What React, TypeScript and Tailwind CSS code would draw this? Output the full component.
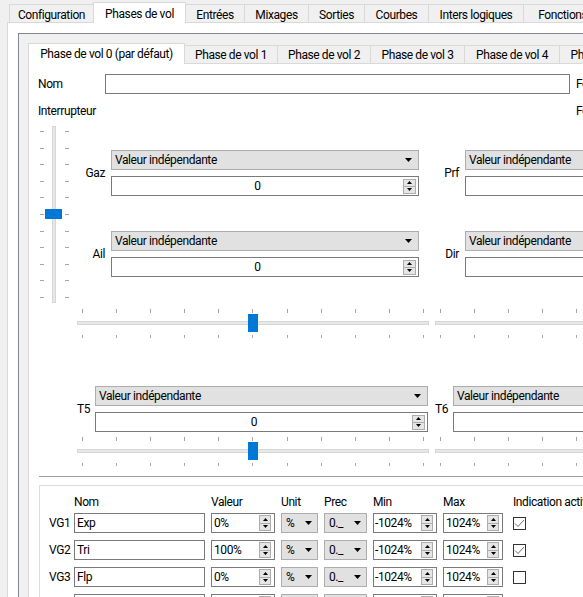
import React from 'react';

const outerTabs = [
  { name: 'Configuration', w: 'w-[85px]' },
  { name: 'Phases de vol', w: 'w-[93px]', active: true },
  { name: 'Entrées', w: 'w-[59px]' },
  { name: 'Mixages', w: 'w-[64px]' },
  { name: 'Sorties', w: 'w-[56px]' },
  { name: 'Courbes', w: 'w-[64px]' },
  { name: 'Inters logiques', w: 'w-[95px]' },
  { name: 'Fonctions spéciales', w: 'w-[128px]' },
];

const innerTabs = [
  { name: 'Phase de vol 0 (par défaut)', w: 'w-[157px]', active: true },
  { name: 'Phase de vol 1', w: 'w-[93px]' },
  { name: 'Phase de vol 2', w: 'w-[93px]' },
  { name: 'Phase de vol 3', w: 'w-[94px]' },
  { name: 'Phase de vol 4', w: 'w-[95px]' },
  { name: 'Phase de vol 5', w: 'w-[94px]' },
];

const vars = [
  { id: 'VG1', name: 'Exp', value: '0%', checked: true },
  { id: 'VG2', name: 'Tri', value: '100%', checked: true },
  { id: 'VG3', name: 'Flp', value: '0%', checked: false },
  { id: 'VG4', name: '', value: '0%', checked: false },
];

const ticks = Array.from({ length: 11 }, (_, i) => i);

function Arrow() {
  return (
    <svg width="7" height="4" viewBox="0 0 7 4" className="shrink-0">
      <path d="M0 0H7L3.5 4Z" fill="#000" />
    </svg>
  );
}

function SpinBtns({ small }: { small?: boolean }) {
  return (
    <div
      className={
        small
          ? 'mr-[3px] flex h-[16px] w-[12px] shrink-0 flex-col border border-[#adadad] bg-[#e5e5e5]'
          : 'mr-[2px] flex h-[15px] w-[13px] shrink-0 flex-col border border-[#adadad] bg-[#e5e5e5]'
      }
    >
      <div className="flex flex-1 items-center justify-center border-b border-[#adadad]">
        <svg width="5" height="3" viewBox="0 0 5 3">
          <path d="M2.5 0L5 3H0Z" fill="#000" />
        </svg>
      </div>
      <div className="flex flex-1 items-center justify-center">
        <svg width="5" height="3" viewBox="0 0 5 3">
          <path d="M0 0H5L2.5 3Z" fill="#000" />
        </svg>
      </div>
    </div>
  );
}

function Trim({ label, labelW, w, value }: { label: string; labelW: string; w: string; value?: string }) {
  return (
    <div className="flex items-center">
      <div className={`${labelW} shrink-0 pr-[6px] text-right`}>{label}</div>
      <div className={`${w} flex shrink-0 flex-col gap-[6px]`}>
        <div className="flex h-[20px] items-center justify-between border border-[#adadad] bg-[#e1e1e1] pl-[3px] pr-[6px]">
          <span>Valeur indépendante</span>
          <Arrow />
        </div>
        <div className="flex h-[20px] items-center border border-[#7a7a7a] bg-white">
          <span className="flex-1 text-center">{value}</span>
          <SpinBtns />
        </div>
      </div>
    </div>
  );
}

function HSlider() {
  return (
    <div className="flex h-[30px] w-[352px] shrink-0 flex-col">
      <div className="flex h-[4px] justify-between px-[5px]">
        {ticks.map((i) => (
          <div key={i} className="h-full w-px bg-[#a5a5a5]" />
        ))}
      </div>
      <div className="relative mt-[1px] flex h-[18px] items-center">
        <div className="h-[4px] w-full border border-[#d6d6d6] bg-[#e7e7e7]" />
        <div className="absolute left-[171px] top-0 h-[18px] w-[10px] bg-[#0078d7]" />
      </div>
      <div className="mt-[3px] flex h-[3px] justify-between px-[5px]">
        {ticks.map((i) => (
          <div key={i} className="h-full w-px bg-[#a5a5a5]" />
        ))}
      </div>
    </div>
  );
}

function VTicks({ className }: { className?: string }) {
  return (
    <div className={`flex h-full w-[4px] flex-col justify-between py-[5px] ${className ?? ''}`}>
      {ticks.map((i) => (
        <div key={i} className="h-px w-full bg-[#a5a5a5]" />
      ))}
    </div>
  );
}

function VSlider() {
  return (
    <div className="ml-[2px] mr-[8px] mt-[7px] flex h-[177px] shrink-0">
      <VTicks />
      <div className="relative ml-[8px] h-full w-[4px] border border-[#d6d6d6] bg-[#e7e7e7]">
        <div className="absolute left-[-8px] top-[82px] h-[10px] w-[17px] bg-[#0078d7]" />
      </div>
      <VTicks className="ml-[9px]" />
    </div>
  );
}

function Checkbox({ checked }: { checked: boolean }) {
  return (
    <div className="flex h-[13px] w-[13px] items-center justify-center border border-[#333] bg-white">
      {checked && (
        <svg width="11" height="9" viewBox="0 0 11 9">
          <path d="M1 4.5L4 7.5L10 1" fill="none" stroke="#6e6e6e" strokeWidth="1" />
        </svg>
      )}
    </div>
  );
}

export default function App() {
  return (
    <div className="h-[597px] w-[583px] overflow-hidden bg-[#f0f0f0] font-['Roboto','Liberation_Sans',sans-serif] text-[12px] leading-[16px] tracking-[-0.4px] text-black">
      {/* outer tabs */}
      <div className="flex h-[22px] items-end pl-[9px]">
        {outerTabs.map((t, i) => (
          <div
            key={t.name}
            className={
              t.active
                ? `${t.w} relative z-10 -mb-px -ml-px flex h-[21px] shrink-0 items-center justify-center border-x border-t border-[#d9d9d9] bg-white pt-[1px]`
                : `${t.w} flex h-[18px] shrink-0 items-center justify-center border-r border-t border-[#d9d9d9] bg-[#f0f0f0] pt-[2px] ${i === 0 ? 'border-l' : ''}`
            }
          >
            {t.name}
          </div>
        ))}
      </div>

      <div className="ml-[7px] h-[600px] w-[700px] border-l border-t border-[#d9d9d9] bg-white pl-[10px] pt-[10px]">
        <div className="h-[600px] w-[700px] border-l border-t border-[#828790] bg-[#f0f0f0] pl-[9px] pt-[9px]">
          {/* inner tabs */}
          <div className="flex h-[20px] items-end">
            {innerTabs.map((t) => (
              <div
                key={t.name}
                className={
                  t.active
                    ? `${t.w} relative z-10 -mb-px flex h-[21px] shrink-0 items-center justify-center border-x border-t border-[#d9d9d9] bg-white`
                    : `${t.w} flex h-[18px] shrink-0 items-center justify-center border-r border-t border-[#d9d9d9] bg-[#f0f0f0] pt-[1px]`
                }
              >
                {t.name}
              </div>
            ))}
          </div>

          <div className="h-[600px] w-[800px] border-l border-t border-[#d9d9d9] bg-white pl-[9px] pt-[10px]">
            <div className="flex h-[20px] items-center">
              <div className="w-[67px] shrink-0">Nom</div>
              <div className="h-[20px] w-[465px] shrink-0 border border-[#7a7a7a] bg-white" />
              <div className="ml-[6px] shrink-0 whitespace-nowrap">Fondu entrée</div>
            </div>
            <div className="mt-[9px] flex h-[16px] items-center">
              <div className="w-[538px] shrink-0">Interrupteur</div>
              <div className="shrink-0 whitespace-nowrap">Fondu sortie</div>
            </div>

            {/* trims */}
            <div className="flex">
              <VSlider />
              <div className="flex w-[352px] shrink-0 flex-col">
                <div className="mt-[31px]">
                  <Trim label="Gaz" labelW="w-[34px]" w="w-[308px]" value="0" />
                </div>
                <div className="mt-[35px]">
                  <Trim label="Ail" labelW="w-[34px]" w="w-[308px]" value="0" />
                </div>
                <div className="mt-[32px]">
                  <HSlider />
                </div>
              </div>
              <div className="ml-[6px] flex w-[352px] shrink-0 flex-col">
                <div className="mt-[31px]">
                  <Trim label="Prf" labelW="w-[30px]" w="w-[308px]" value="0" />
                </div>
                <div className="mt-[35px]">
                  <Trim label="Dir" labelW="w-[30px]" w="w-[308px]" value="0" />
                </div>
                <div className="mt-[32px]">
                  <HSlider />
                </div>
              </div>
            </div>

            <div className="mt-[47px] flex pl-[39px]">
              <div className="flex w-[352px] shrink-0 flex-col">
                <Trim label="T5" labelW="w-[18px]" w="w-[333px]" value="0" />
                <div className="mt-[5px]">
                  <HSlider />
                </div>
              </div>
              <div className="ml-[6px] flex w-[352px] shrink-0 flex-col">
                <Trim label="T6" labelW="w-[18px]" w="w-[333px]" value="0" />
                <div className="mt-[5px]">
                  <HSlider />
                </div>
              </div>
            </div>

            <div className="ml-[1px] mt-[9px] h-px w-[760px] bg-[#a0a0a0]" />

            {/* global variables */}
            <div className="ml-[1px] mt-[8px] w-[760px] border-l border-t border-[#dcdcdc] bg-white pl-[9px] pt-[8px]">
              <div className="flex h-[16px] items-center gap-x-[6px]">
                <div className="w-[19px] shrink-0" />
                <div className="w-[131px] shrink-0">Nom</div>
                <div className="w-[64px] shrink-0">Valeur</div>
                <div className="w-[37px] shrink-0">Unit</div>
                <div className="w-[43px] shrink-0">Prec</div>
                <div className="w-[64px] shrink-0">Min</div>
                <div className="w-[60px] shrink-0">Max</div>
                <div className="shrink-0 whitespace-nowrap pl-[4px]">Indication active</div>
              </div>
              <div className="mt-[3px] flex flex-col gap-y-[7px]">
                {vars.map((v) => (
                  <div key={v.id} className="flex h-[20px] items-center gap-x-[6px]">
                    <div className="w-[19px] shrink-0">{v.id}</div>
                    <div className="h-[20px] w-[131px] shrink-0 border border-[#7a7a7a] bg-white pl-[2px] leading-[18px]">
                      {v.name}
                    </div>
                    <div className="flex h-[20px] w-[64px] shrink-0 items-center border border-[#7a7a7a] bg-white">
                      <span className="flex-1 pl-[2px]">{v.value}</span>
                      <SpinBtns small />
                    </div>
                    <div className="flex h-[20px] w-[37px] shrink-0 items-center justify-between border border-[#adadad] bg-[#e1e1e1] pl-[4px] pr-[5px]">
                      <span>%</span>
                      <Arrow />
                    </div>
                    <div className="flex h-[20px] w-[43px] shrink-0 items-center justify-between border border-[#adadad] bg-[#e1e1e1] pl-[4px] pr-[5px]">
                      <span>0._</span>
                      <Arrow />
                    </div>
                    <div className="flex h-[20px] w-[64px] shrink-0 items-center border border-[#7a7a7a] bg-white">
                      <span className="flex-1 pl-[1px]">-1024%</span>
                      <SpinBtns small />
                    </div>
                    <div className="flex h-[20px] w-[60px] shrink-0 items-center border border-[#7a7a7a] bg-white">
                      <span className="flex-1 pl-[2px]">1024%</span>
                      <SpinBtns small />
                    </div>
                    <div className="shrink-0 pl-[4px]">
                      <Checkbox checked={v.checked} />
                    </div>
                  </div>
                ))}
              </div>
            </div>
          </div>
        </div>
      </div>
    </div>
  );
}
